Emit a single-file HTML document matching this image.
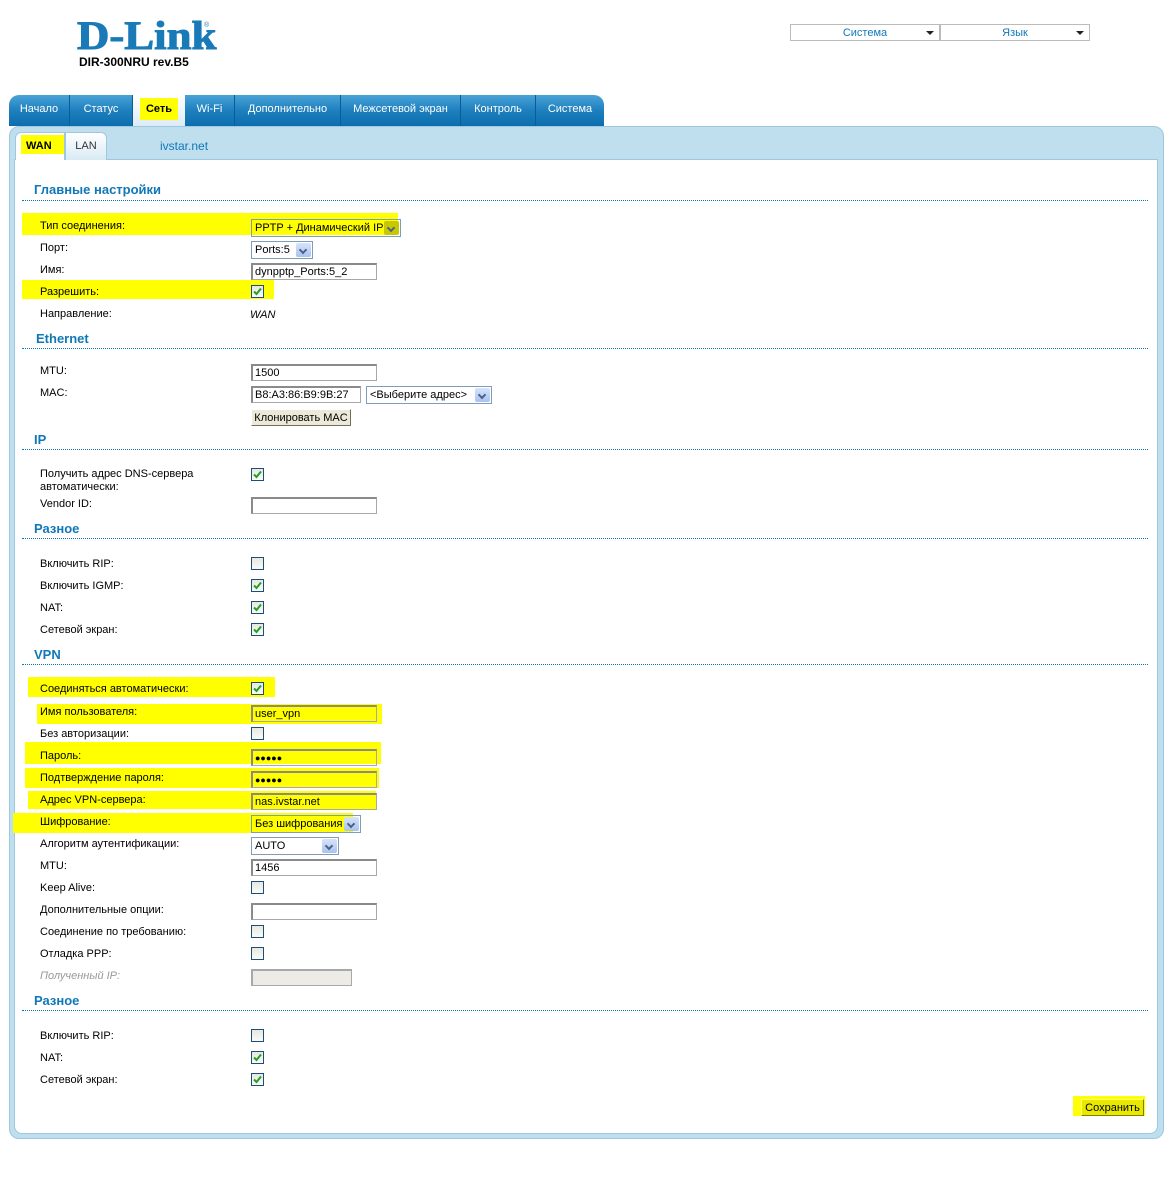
<!DOCTYPE html>
<html><head><meta charset="utf-8">
<style>
*{margin:0;padding:0;box-sizing:border-box}
body{width:1172px;height:1178px;background:#fff;position:relative;font-family:"Liberation Sans","DejaVu Sans",sans-serif;font-size:11px;color:#000;overflow:hidden}
.a{position:absolute}
.y{position:absolute;background:#ffff00}
.l{position:absolute;left:40px;font-size:11px;line-height:14px;white-space:nowrap;margin-top:1px}
.h{position:absolute;left:34px;font-size:13px;font-weight:bold;color:#1078b8;line-height:16px}
.hr{position:absolute;left:22px;width:1126px;border-top:1px dotted #1078b8}
.cb{position:absolute;left:251px;width:13px;height:13px;border:1px solid #1c4e7a;background:linear-gradient(#e8e8e0,#fafaf8)}
.cb svg{position:absolute;left:1px;top:1px}
.in{position:absolute;height:17px;border:1px solid #a8a8a8;border-top:2px solid #8a8a8a;border-left:2px solid #8a8a8a;background:#fff;font-size:11px;line-height:14px;padding-left:2px;white-space:nowrap}
.se{position:absolute;height:18px;border:1px solid #7f9db9;background:#fff;font-size:11px;line-height:17px;padding-left:3px;white-space:nowrap}
.se i{position:absolute;right:1px;top:1px;width:15px;height:14px;background:linear-gradient(#d6e4fb,#a9c2ef);border-radius:2px}
.se i:after{content:"";position:absolute;left:4px;top:4px;width:4px;height:4px;border-right:2px solid #4d6185;border-bottom:2px solid #4d6185;transform:rotate(45deg)}
.tab{position:absolute;top:95px;height:31px;color:#fff;font-size:11px;line-height:28px;text-align:center;border-right:1px solid #0b5d94;background:linear-gradient(#4aa3d6,#1d7fbe 50%,#0d6eaf)}
</style></head><body>
<div class="a" style="left:77px;top:14px;font-family:'Liberation Serif',serif;font-weight:bold;font-size:40px;color:#1a7ab8;line-height:44px;transform:scaleX(1.12);transform-origin:0 0;-webkit-text-stroke:1px #1a7ab8">D-Link</div>
<div class="a" style="left:204px;top:22px;font-size:7px;color:#1a7ab8">®</div>
<div class="a" style="left:79px;top:55px;font-size:12px;font-weight:bold;line-height:14px">DIR-300NRU rev.B5</div>

<div class="a" style="left:790px;top:24px;width:150px;height:17px;border:1px solid #bbb;color:#1078b8;text-align:center;line-height:16px;font-size:11px">Система<span class="a" style="right:5px;top:6px;border:4px solid transparent;border-top:4px solid #222;border-bottom:0;width:0;height:0"></span></div>
<div class="a" style="left:940px;top:24px;width:150px;height:17px;border:1px solid #bbb;color:#1078b8;text-align:center;line-height:16px;font-size:11px">Язык<span class="a" style="right:5px;top:6px;border:4px solid transparent;border-top:4px solid #222;border-bottom:0;width:0;height:0"></span></div>

<div class="tab" style="left:9px;width:61px;border-radius:10px 0 0 0">Начало</div>
<div class="tab" style="left:70px;width:63px">Статус</div>
<div class="tab" style="left:133px;width:52px;background:linear-gradient(#fff,#dcecf6);color:#000;font-weight:bold;border:none"><span style="background:#ffff00;padding:5px 6px">Сеть</span></div>
<div class="tab" style="left:185px;width:50px">Wi-Fi</div>
<div class="tab" style="left:235px;width:106px">Дополнительно</div>
<div class="tab" style="left:341px;width:120px">Межсетевой экран</div>
<div class="tab" style="left:461px;width:75px">Контроль</div>
<div class="tab" style="left:536px;width:68px;border-radius:0 10px 0 0;border-right:none">Система</div>

<div class="a" style="left:9px;top:126px;width:1155px;height:1013px;background:#bfdeee;border:1px solid #9ec8e0;border-radius:10px"></div>
<div class="a" style="left:14px;top:159px;width:1144px;height:975px;background:#fff;border:1px solid #9ec8e0;border-radius:0 0 8px 8px"></div>
<div class="a" style="left:15px;top:132px;width:50px;height:28px;background:#fff;border-radius:6px 0 0 0;border:1px solid #9ec8e0;border-bottom:none"></div>
<div class="a" style="left:65px;top:132px;width:42px;height:28px;background:linear-gradient(#fff,#d8eaf4);border-radius:0 6px 0 0;border:1px solid #9ec8e0;border-bottom:none;text-align:center;line-height:26px;color:#333">LAN</div>
<div class="y" style="left:21px;top:135px;width:43px;height:19px"></div>
<div class="a" style="left:26px;top:139px;font-weight:bold;line-height:14px">WAN</div>
<div class="a" style="left:160px;top:139px;color:#1078b8;font-size:12px;line-height:14px">ivstar.net</div>

<div class="y" style="left:22px;top:213px;width:376px;height:22px"></div>
<div class="y" style="left:22px;top:280px;width:252px;height:19px"></div>
<div class="y" style="left:28px;top:677px;width:247px;height:20px"></div>
<div class="y" style="left:37px;top:704px;width:345px;height:20px"></div>
<div class="y" style="left:25px;top:742px;width:356px;height:22px"></div>
<div class="y" style="left:25px;top:768px;width:354px;height:20px"></div>
<div class="y" style="left:28px;top:791px;width:348px;height:18px"></div>
<div class="y" style="left:13px;top:813px;width:340px;height:20px"></div>

<div class="h" style="top:182px">Главные настройки</div><div class="hr" style="top:200px"></div>
<div class="l" style="top:218px">Тип соединения:</div>
<div class="se" style="left:251px;top:219px;width:150px;background:transparent">PPTP + Динамический IP<i style="background:#c8c800"></i></div>
<div class="l" style="top:240px">Порт:</div>
<div class="se" style="left:251px;top:241px;width:62px">Ports:5<i></i></div>
<div class="l" style="top:262px">Имя:</div>
<div class="in" style="left:251px;top:263px;width:126px">dynpptp_Ports:5_2</div>
<div class="l" style="top:284px">Разрешить:</div>
<div class="cb" style="top:285px"><svg width="9" height="9"><path d="M1 4.5L3.5 7L8 1.5" stroke="#22a020" stroke-width="2" fill="none"/></svg></div>
<div class="l" style="top:306px">Направление:</div>
<div class="a" style="left:250px;top:308px;font-style:italic;line-height:14px">WAN</div>

<div class="h" style="top:331px;left:36px">Ethernet</div><div class="hr" style="top:348px"></div>
<div class="l" style="top:363px">MTU:</div>
<div class="in" style="left:251px;top:364px;width:126px">1500</div>
<div class="l" style="top:385px">MAC:</div>
<div class="in" style="left:251px;top:386px;width:110px">B8:A3:86:B9:9B:27</div>
<div class="se" style="left:366px;top:386px;width:126px">&lt;Выберите адрес&gt;<i></i></div>
<div class="a" style="left:251px;top:409px;width:100px;height:17px;background:#ece9d8;border:1px solid;border-color:#fff #716f64 #716f64 #fff;text-align:center;line-height:16px">Клонировать MAC</div>

<div class="h" style="top:432px">IP</div><div class="hr" style="top:449px"></div>
<div class="l" style="top:467px;line-height:13px">Получить адрес DNS-сервера<br>автоматически:</div>
<div class="cb" style="top:468px"><svg width="9" height="9"><path d="M1 4.5L3.5 7L8 1.5" stroke="#22a020" stroke-width="2" fill="none"/></svg></div>
<div class="l" style="top:496px">Vendor ID:</div>
<div class="in" style="left:251px;top:497px;width:126px"></div>

<div class="h" style="top:521px">Разное</div><div class="hr" style="top:538px"></div>
<div class="l" style="top:556px">Включить RIP:</div><div class="cb" style="top:557px"></div>
<div class="l" style="top:578px">Включить IGMP:</div><div class="cb" style="top:579px"><svg width="9" height="9"><path d="M1 4.5L3.5 7L8 1.5" stroke="#22a020" stroke-width="2" fill="none"/></svg></div>
<div class="l" style="top:600px">NAT:</div><div class="cb" style="top:601px"><svg width="9" height="9"><path d="M1 4.5L3.5 7L8 1.5" stroke="#22a020" stroke-width="2" fill="none"/></svg></div>
<div class="l" style="top:622px">Сетевой экран:</div><div class="cb" style="top:623px"><svg width="9" height="9"><path d="M1 4.5L3.5 7L8 1.5" stroke="#22a020" stroke-width="2" fill="none"/></svg></div>

<div class="h" style="top:647px">VPN</div><div class="hr" style="top:664px"></div>
<div class="l" style="top:681px">Соединяться автоматически:</div><div class="cb" style="top:682px"><svg width="9" height="9"><path d="M1 4.5L3.5 7L8 1.5" stroke="#22a020" stroke-width="2" fill="none"/></svg></div>
<div class="l" style="top:704px">Имя пользователя:</div><div class="in" style="left:251px;top:705px;width:126px;background:transparent">user_vpn</div>
<div class="l" style="top:726px">Без авторизации:</div><div class="cb" style="top:727px"></div>
<div class="l" style="top:748px">Пароль:</div><div class="in" style="left:251px;top:749px;width:126px;background:transparent;font-size:9px;font-weight:bold">●●●●●</div>
<div class="l" style="top:770px">Подтверждение пароля:</div><div class="in" style="left:251px;top:771px;width:126px;background:transparent;font-size:9px;font-weight:bold">●●●●●</div>
<div class="l" style="top:792px">Адрес VPN-сервера:</div><div class="in" style="left:251px;top:793px;width:126px;background:transparent">nas.ivstar.net</div>
<div class="l" style="top:814px">Шифрование:</div><div class="se" style="left:251px;top:815px;width:110px;background:transparent">Без шифрования<i></i></div>
<div class="l" style="top:836px">Алгоритм аутентификации:</div><div class="se" style="left:251px;top:837px;width:88px">AUTO<i></i></div>
<div class="l" style="top:858px">MTU:</div><div class="in" style="left:251px;top:859px;width:126px">1456</div>
<div class="l" style="top:880px">Keep Alive:</div><div class="cb" style="top:881px"></div>
<div class="l" style="top:902px">Дополнительные опции:</div><div class="in" style="left:251px;top:903px;width:126px"></div>
<div class="l" style="top:924px">Соединение по требованию:</div><div class="cb" style="top:925px"></div>
<div class="l" style="top:946px">Отладка PPP:</div><div class="cb" style="top:947px"></div>
<div class="l" style="top:968px;font-style:italic;color:#999">Полученный IP:</div><div class="in" style="left:251px;top:969px;width:101px;background:#ecebe6;border-color:#a8a8a8"></div>

<div class="h" style="top:993px">Разное</div><div class="hr" style="top:1010px"></div>
<div class="l" style="top:1028px">Включить RIP:</div><div class="cb" style="top:1029px"></div>
<div class="l" style="top:1050px">NAT:</div><div class="cb" style="top:1051px"><svg width="9" height="9"><path d="M1 4.5L3.5 7L8 1.5" stroke="#22a020" stroke-width="2" fill="none"/></svg></div>
<div class="l" style="top:1072px">Сетевой экран:</div><div class="cb" style="top:1073px"><svg width="9" height="9"><path d="M1 4.5L3.5 7L8 1.5" stroke="#22a020" stroke-width="2" fill="none"/></svg></div>

<div class="y" style="left:1073px;top:1096px;width:72px;height:20px"></div>
<div class="a" style="left:1081px;top:1099px;width:63px;height:17px;background:#e8e800;border:1px solid;border-color:#ffff80 #808000 #808000 #ffff80;text-align:center;line-height:16px">Сохранить</div>
</body></html>
